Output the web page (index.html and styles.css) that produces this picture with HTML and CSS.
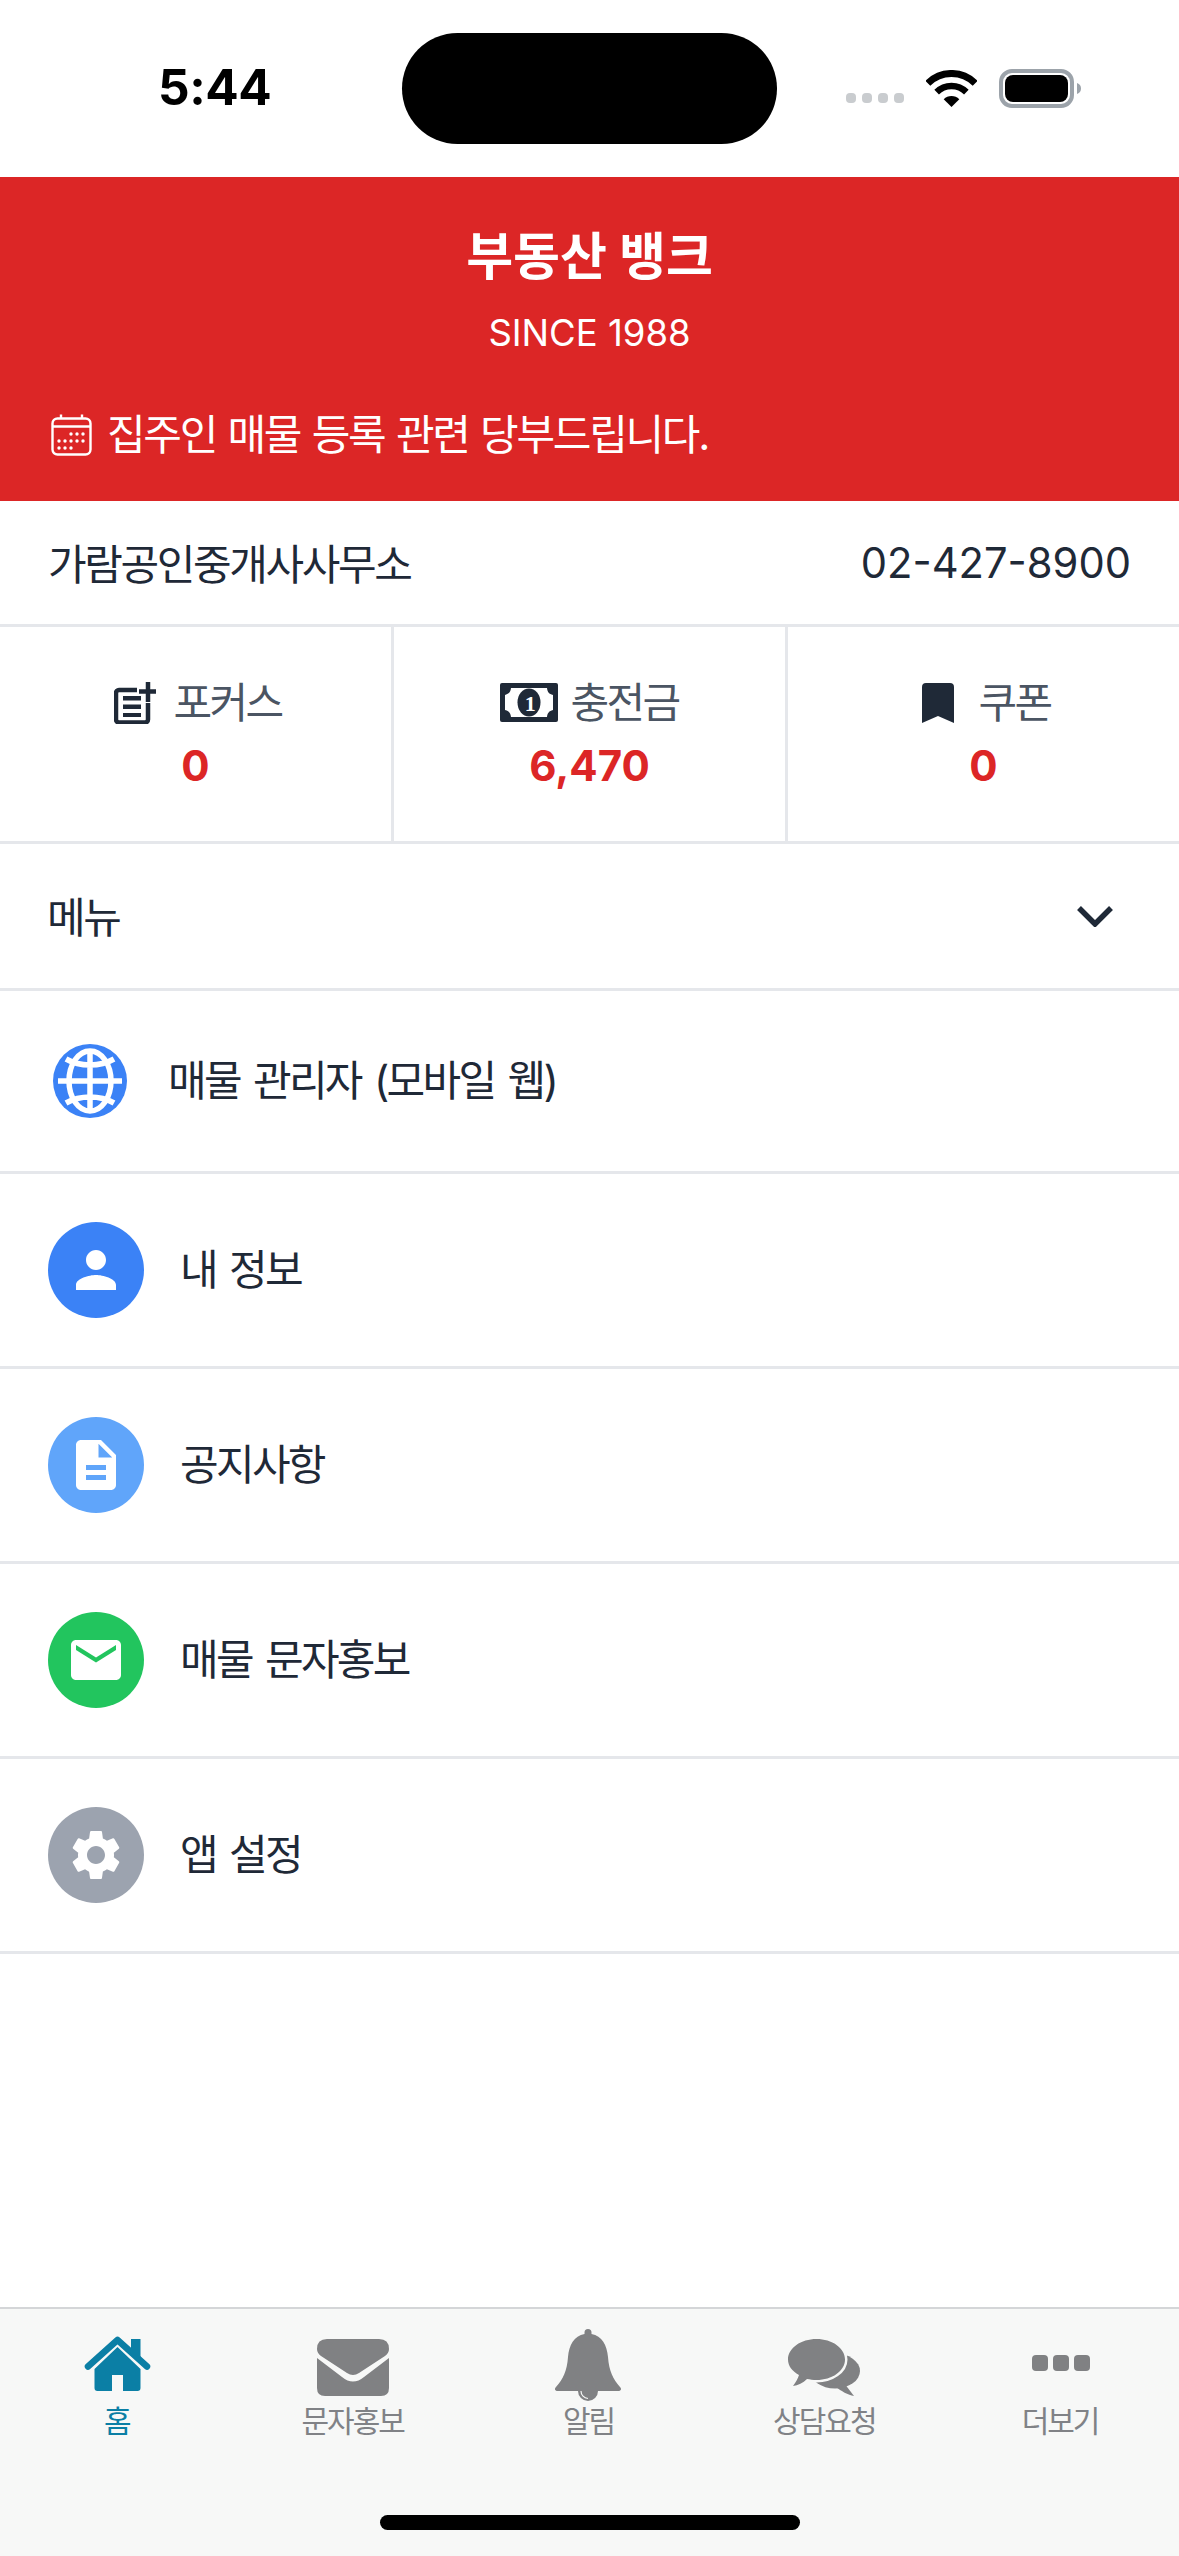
FILE: index.html
```html
<!DOCTYPE html>
<html lang="ko">
<head>
<meta charset="utf-8">
<title>부동산 뱅크</title>
<link rel="stylesheet" href="styles.css">
</head>
<body>
<div class="page">
  <div class="status">
    <span class="time">5:44</span>
    <div class="island"></div>
    <div class="status-icons">
      <div class="signal"><i></i><i></i><i></i><i></i></div>
      <svg class="wifi" viewBox="0 0 51 37"><path d="M1.8 13.3A33.5 33.5 0 0 1 49.2 13.3" fill="none" stroke="#000" stroke-width="7"/><path d="M10.65 22.15A21 21 0 0 1 40.35 22.15" fill="none" stroke="#000" stroke-width="6.5"/><path d="M25.5 37L17.7 29.2A11 11 0 0 1 33.3 29.2Z"/></svg>
      <svg class="battery" viewBox="0 0 83 39"><rect x="2" y="2" width="71" height="35" rx="11" fill="none" stroke="#9ca3aa" stroke-width="4"/><rect x="6" y="6" width="63" height="27" rx="8"/><path d="M78 14c3 1 4 3 4 5.500s-1 4.500-4 5.500z" fill="#9ca3aa"/></svg>
    </div>
  </div>

  <header class="hero">
    <h1 class="hero-title">부동산 뱅크</h1>
    <p class="hero-since">SINCE 1988</p>
    <p class="hero-notice">
      <svg class="cal" viewBox="0 0 41 42" fill="none" stroke="#fff" stroke-width="2.400"><rect x="1.500" y="4.500" width="38" height="36" rx="5"/><path d="M1.500 12.500H39.500M10 0.500V5M31 0.500V5"/><g fill="#fff" stroke="none"><circle cx="20" cy="20" r="1.700"/><circle cx="26" cy="20" r="1.700"/><circle cx="32" cy="20" r="1.700"/><circle cx="8" cy="27" r="1.700"/><circle cx="14" cy="27" r="1.700"/><circle cx="20" cy="27" r="1.700"/><circle cx="26" cy="27" r="1.700"/><circle cx="32" cy="27" r="1.700"/><circle cx="8" cy="34" r="1.700"/><circle cx="14" cy="34" r="1.700"/><circle cx="20" cy="34" r="1.700"/></g></svg>
      <span>집주인 매물 등록 관련 당부드립니다.</span>
    </p>
  </header>

  <div class="info">
    <span class="info-name">가람공인중개사사무소</span>
    <span class="info-phone">02-427-8900</span>
  </div>

  <div class="stats">
    <div class="stat">
      <div class="stat-label gap-note">
        <svg class="ic-note" viewBox="0 0 42 42"><path d="M23 8H5a3 3 0 0 0-3 3V37.500a3 3 0 0 0 3 3h26a3 3 0 0 0 3-3V21" fill="none" stroke="#1f2937" stroke-width="4.500"/><path d="M9 14h18v4.500H9zM9 22.500h18v4.500H9zM9 31h18v4H9z" fill="#1f2937"/><path d="M34 0v20M25 9.500h17" stroke="#1f2937" stroke-width="4.500" fill="none"/></svg>
        <span>포커스</span>
      </div>
      <div class="stat-value">0</div>
    </div>
    <div class="stat">
      <div class="stat-label gap-money">
        <svg class="ic-money" viewBox="0 0 58 39"><rect width="58" height="39" rx="2" fill="#1f2937"/><path d="M11 5H47C47.500 9 49 11 53 12V27C49 28 47.500 30 47 34H11C10.500 30 9 28 5 27V12C9 11 10.500 9 11 5Z" fill="#fff"/><ellipse cx="29" cy="19.500" rx="11.500" ry="14" fill="#1f2937"/><text x="29" y="27.500" class="bill-one">1</text></svg>
        <span>충전금</span>
      </div>
      <div class="stat-value">6,470</div>
    </div>
    <div class="stat">
      <div class="stat-label gap-book">
        <svg class="ic-book" viewBox="0 0 32 40"><path d="M0 4a4 4 0 0 1 4-4h24a4 4 0 0 1 4 4v36L16 33 0 40z" fill="#1f2937"/></svg>
        <span>쿠폰</span>
      </div>
      <div class="stat-value">0</div>
    </div>
  </div>

  <div class="menu-head">
    <span class="menu-title">메뉴</span>
    <svg class="chev" viewBox="0 0 36 21" fill="none" stroke="#1f2937" stroke-width="5.500"><path d="M2 2L18 18L34 2"/></svg>
  </div>

  <ul class="menu">
    <li class="item item-first">
      <svg class="globe" viewBox="0 0 74 74"><circle cx="37" cy="37" r="37" fill="#3b82f6"/><g fill="none" stroke="#fff" stroke-width="5.500"><ellipse cx="37" cy="37" rx="21" ry="30"/><path d="M5 37H69M37 6V68M13 15C27 23 47 23 61 15M13 59C27 51 47 51 61 59"/></g></svg>
      <span class="item-text">매물 관리자 (모바일 웹)</span>
    </li>
    <li class="item">
      <div class="badge c-blue"><svg viewBox="0 0 24 24"><path d="M12 12c2.210 0 4-1.790 4-4s-1.790-4-4-4-4 1.790-4 4 1.790 4 4 4zm0 2c-2.670 0-8 1.340-8 4v2h16v-2c0-2.660-5.330-4-8-4z"/></svg></div>
      <span class="item-text">내 정보</span>
    </li>
    <li class="item">
      <div class="badge c-sky"><svg viewBox="0 0 24 24"><path d="M14 2H6c-1.100 0-2 .9-2 2v16c0 1.100.89 2 1.990 2H18c1.100 0 2-.9 2-2V8l-6-6zm2 16H8v-2h8v2zm0-4H8v-2h8v2zm-3-5V3.500L18.500 9H13z"/></svg></div>
      <span class="item-text">공지사항</span>
    </li>
    <li class="item">
      <div class="badge c-green"><svg viewBox="0 0 24 24"><path d="M20 4H4c-1.100 0-1.990.9-1.990 2L2 18c0 1.100.9 2 2 2h16c1.100 0 2-.9 2-2V6c0-1.100-.9-2-2-2zm0 4l-8 5-8-5V6l8 5 8-5v2z"/></svg></div>
      <span class="item-text">매물 문자홍보</span>
    </li>
    <li class="item">
      <div class="badge c-gray"><svg viewBox="0 0 24 24"><path d="M19.140 12.940c.04-.3.06-.61.06-.94 0-.32-.02-.64-.07-.94l2.030-1.580c.18-.14.23-.41.12-.61l-1.920-3.320c-.12-.22-.37-.29-.59-.22l-2.390.96c-.5-.38-1.030-.7-1.620-.94l-.36-2.540c-.04-.24-.24-.41-.48-.41h-3.840c-.24 0-.43.17-.47.41l-.36 2.540c-.59.24-1.130.57-1.620.94l-2.390-.96c-.22-.08-.47 0-.59.22L2.740 8.870c-.12.21-.08.47.12.61l2.030 1.580c-.05.3-.09.63-.09.94s.02.64.07.94l-2.030 1.580c-.18.14-.23.41-.12.61l1.920 3.320c.12.22.37.29.59.22l2.390-.96c.5.38 1.030.7 1.620.94l.36 2.540c.05.24.24.41.48.41h3.840c.24 0 .44-.17.47-.41l.36-2.540c.59-.24 1.130-.56 1.620-.94l2.390.96c.22.08.47 0 .59-.22l1.920-3.320c.12-.22.07-.47-.12-.61l-2.010-1.580zM12 15.600c-1.980 0-3.600-1.620-3.600-3.600s1.620-3.600 3.600-3.600 3.600 1.620 3.600 3.600-1.620 3.600-3.600 3.600z"/></svg></div>
      <span class="item-text">앱 설정</span>
    </li>
  </ul>

  <nav class="tabbar">
    <div class="tabs">
      <div class="tab tab-on">
        <svg viewBox="0 0 80 72"><path d="M10 37.500L39.500 11L69 37.500" fill="none" stroke="#0b7fa5" stroke-width="6.500" stroke-linecap="round" stroke-linejoin="round"/><path d="M53 10h9.500v24L53 26z" fill="#0b7fa5"/><path fill-rule="evenodd" d="M39.500 18L62.500 40V59a3 3 0 0 1-3 3H19.500a3 3 0 0 1-3-3V40zM34 46V62H45V46z" fill="#0b7fa5"/></svg>
        <span>홈</span>
      </div>
      <div class="tab">
        <svg viewBox="0 0 80 72"><path d="M3 20Q3 10 13 10H65Q75 10 75 20Q75 24 71 27L45 44Q39 48 33 44L7 27Q3 24 3 20Z"/><path d="M3 29L28 48Q39 57 50 48L75 29V59Q75 67 67 67H11Q3 67 3 59Z"/></svg>
        <span>문자홍보</span>
      </div>
      <div class="tab">
        <svg viewBox="0 0 80 72"><path d="M39 0a3.500 3.500 0 0 1 3.500 3.500V5C53 7 58 16 59 28C60 42 64 50 71 58C73 60 72 62 69 62H9C6 62 5 60 7 58C14 50 18 42 19 28C20 16 25 7 35.500 5V3.500A3.500 3.500 0 0 1 39 0Z"/><path d="M29 62a10 10 0 0 0 20 0z"/><path d="M32 62a7.500 7.500 0 0 0 7 7.500" fill="none" stroke="#f7f8f7" stroke-width="1.200"/></svg>
        <span>알림</span>
      </div>
      <div class="tab">
        <svg viewBox="0 0 80 72"><ellipse cx="50" cy="42" rx="25" ry="17.500"/><path d="M59 54L69 67C63 66 56 62 51 58z"/><path d="M31.500 10C47 10 60 19 60 30.500S47 51 31.500 51C28 51 25 50.500 22 50C18 54 13 56.500 8 57C11 53 13 49 14 46C7 42 3 37 3 30.500C3 19 16 10 31.500 10Z" stroke="#f7f8f7" stroke-width="5" paint-order="stroke"/></svg>
        <span>상담요청</span>
      </div>
      <div class="tab">
        <svg viewBox="0 0 80 72"><rect x="11" y="26" width="16" height="16" rx="4"/><rect x="32" y="26" width="16" height="16" rx="4"/><rect x="53" y="26" width="16" height="16" rx="4"/></svg>
        <span>더보기</span>
      </div>
    </div>
    <div class="home-bar"></div>
  </nav>
</div>
</body>
</html>
```

FILE: styles.css
```css
* { box-sizing: border-box; }
html, body { margin: 0; padding: 0; background: #fff; }
body { font-family: "Inter", "Noto Sans CJK KR", sans-serif; color: #1f2937; }
.page { width: 1179px; height: 2556px; display: flex; flex-direction: column; overflow: hidden; }

.status { height: 177px; display: flex; align-items: center; padding: 0 97px 0 158px; }
.time { width: 244px; font-size: 49.5px; font-weight: 700; color: #000; letter-spacing: -0.5px; margin-bottom: 3px; }
.island { width: 375px; height: 111px; border-radius: 56px; background: #000; }
.status-icons { margin-left: auto; display: flex; align-items: center; }
.signal { display: flex; gap: 6px; margin-top: 18px; margin-right: 22px; }
.signal i { width: 10px; height: 10px; border-radius: 4px; background: #c9cccf; }
.wifi { width: 51px; height: 37px; margin-right: 22px; }
.battery { width: 83px; height: 39px; }

.hero { height: 324px; background: #dc2626; color: #fff; padding: 50px 48px 0; display: flex; flex-direction: column; }
.hero-title { margin: 0; font-size: 51px; line-height: 60px; font-weight: 700; text-align: center; }
.hero-since { margin: 24px 0 0; font-size: 36.5px; line-height: 44px; text-align: center; }
.hero-notice { margin: 55px 0 0; display: flex; align-items: center; gap: 15px; font-size: 42px; line-height: 50px; padding-left: 3px; letter-spacing: -2.3px; word-spacing: 2px; }
.cal { width: 41px; height: 42px; }

.info { height: 126px; border-bottom: 3px solid #e5e7eb; padding: 0 48px; display: flex; align-items: center; justify-content: space-between; font-size: 42px; }
.info-name { letter-spacing: -2.4px; margin-bottom: 2px; }
.info-phone { font-size: 41.7px; }

.stats { height: 217px; border-bottom: 3px solid #e5e7eb; display: flex; }
.stat { flex: 1; display: flex; flex-direction: column; align-items: center; justify-content: center; gap: 11px; padding-top: 2px; border-right: 3px solid #e5e7eb; }
.stat:last-child { border-right: 0; }
.stat-label { display: flex; align-items: center; color: #4b5563; font-size: 42px; line-height: 50px; letter-spacing: -2.6px; }
.gap-note { gap: 17px; margin-left: 5px; }
.gap-money { gap: 12px; }
.gap-book { gap: 24px; margin-left: 6px; }
.stat-value { color: #dc2626; font-size: 42px; font-weight: 700; line-height: 54px; }
.ic-note { width: 42px; height: 42px; }
.ic-money { width: 58px; height: 39px; }
.ic-book { width: 32px; height: 40px; }
.bill-one { font-family: "Liberation Serif", serif; font-size: 22px; font-weight: 700; fill: #fff; text-anchor: middle; }

.menu-head { height: 147px; border-bottom: 3px solid #e5e7eb; padding: 0 66px 0 47px; display: flex; align-items: center; justify-content: space-between; font-size: 42px; }
.menu-title { letter-spacing: -2.3px; margin-bottom: 4px; }
.chev { width: 36px; height: 21px; }

.menu { list-style: none; margin: 0; padding: 0; }
.item { height: 195px; border-bottom: 3px solid #e5e7eb; padding-left: 48px; display: flex; align-items: center; gap: 36px; font-size: 42px; }
.item-first { height: 183px; padding-left: 53px; gap: 41px; }
.item-text { letter-spacing: -2.7px; word-spacing: 4px; margin-bottom: 7px; }
.globe { width: 74px; height: 74px; }
.badge { width: 96px; height: 96px; border-radius: 50%; display: flex; align-items: center; justify-content: center; }
.badge svg { width: 60px; height: 60px; fill: #fff; }
.c-blue { background: #3b82f6; }
.c-sky { background: #60a5fa; }
.c-green { background: #22c55e; }
.c-gray { background: #9ca3af; }

.tabbar { margin-top: auto; height: 249px; background: #f7f8f7; border-top: 2px solid #d4d6d8; display: flex; flex-direction: column; }
.tabs { display: flex; padding-top: 20px; }
.tab { flex: 1; display: flex; flex-direction: column; align-items: center; color: #808286; font-size: 30px; line-height: 36px; letter-spacing: -2px; }
.tab svg { width: 80px; height: 72px; fill: #808183; }
.tab span { margin: 2px 2px 0 0; }
.tab-on { color: #0b7fa5; }
.home-bar { width: 420px; height: 15px; border-radius: 8px; background: #000; margin: 76px auto 0; }
```
